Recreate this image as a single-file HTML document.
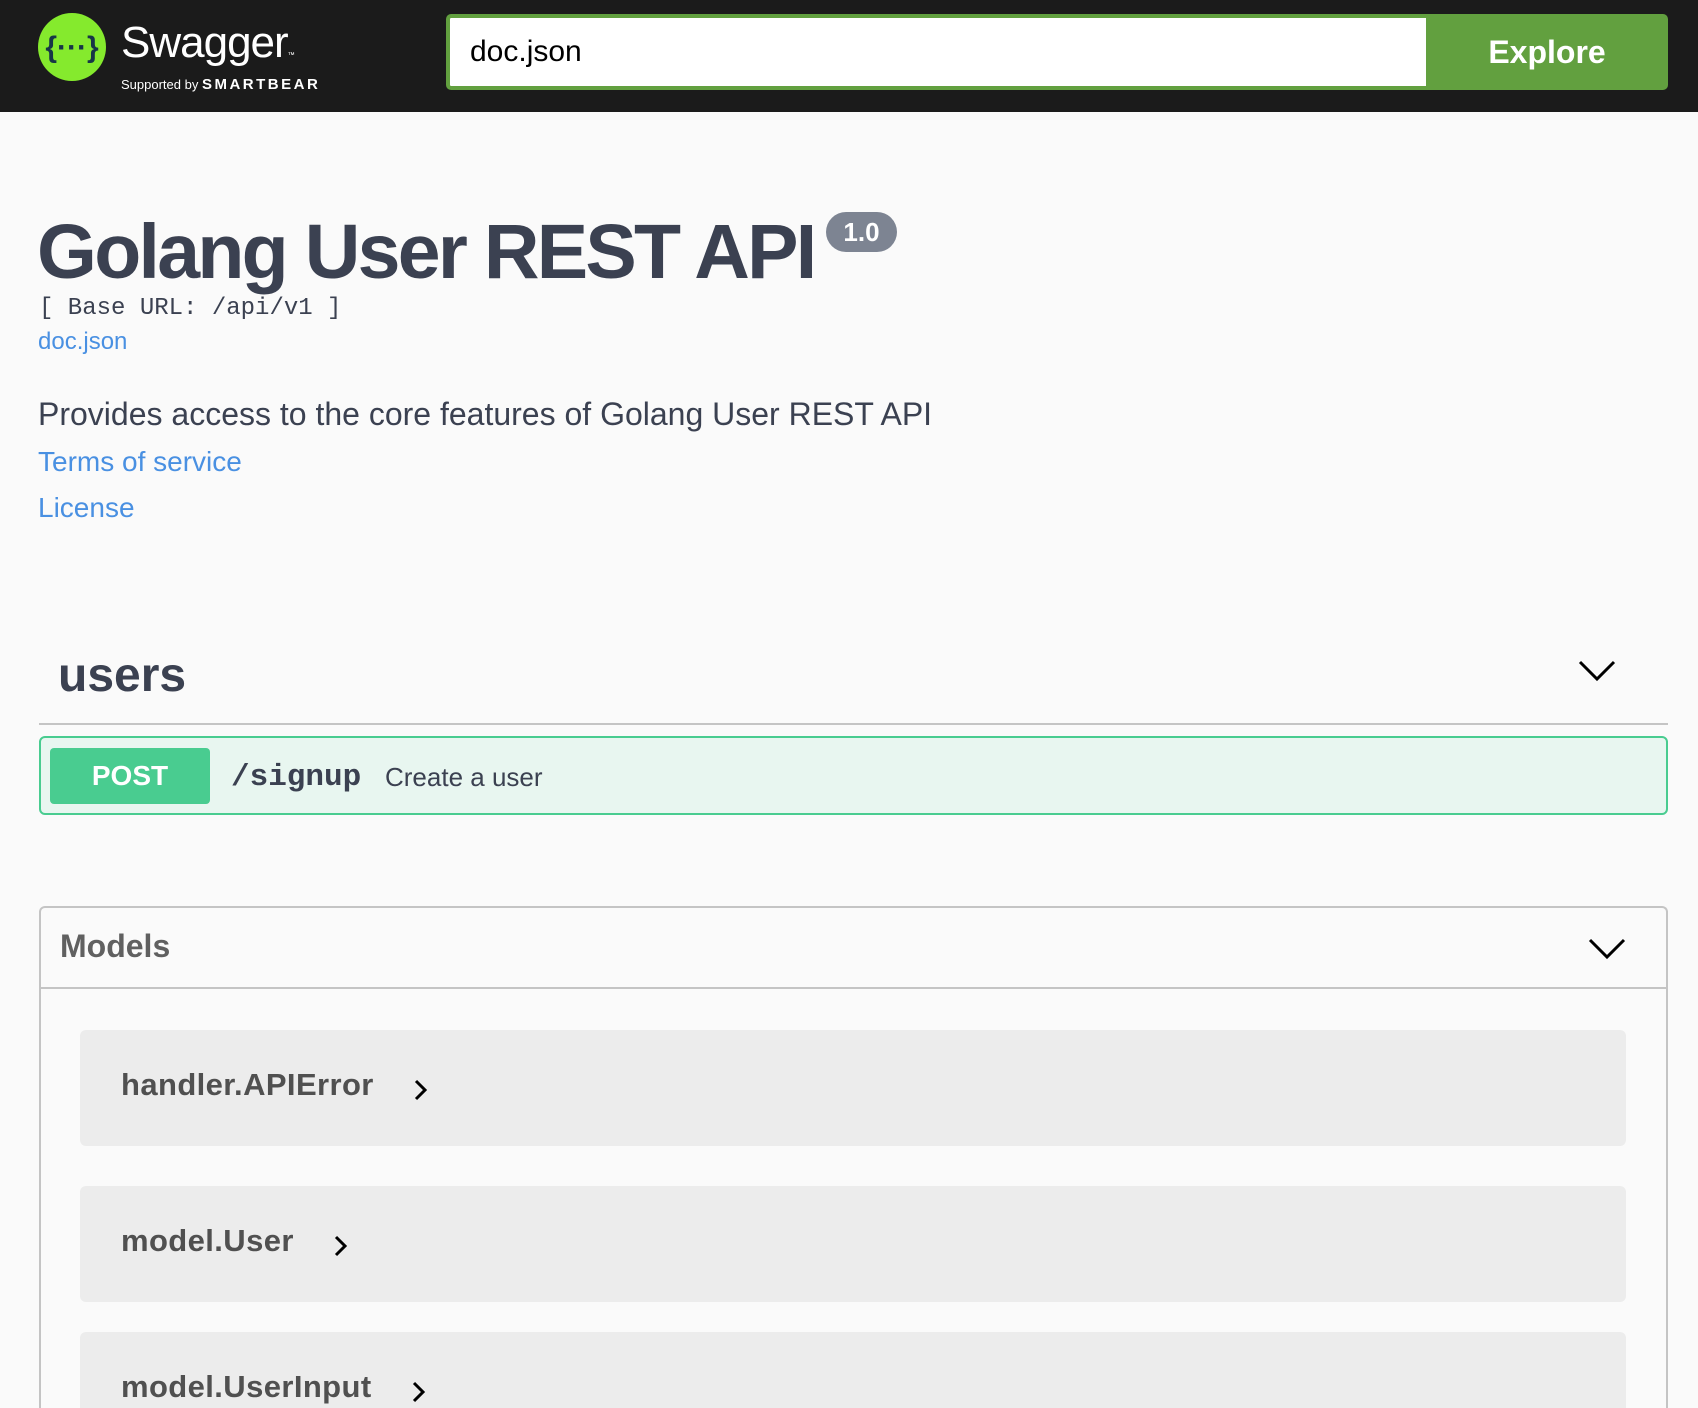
<!DOCTYPE html>
<html style="overflow:hidden;height:1408px"><head><meta charset="utf-8"><style>
*{margin:0;padding:0;box-sizing:border-box}
html,body{overflow:hidden}
body{width:1698px;height:1408px;background:#fafafa;font-family:"Liberation Sans",Arial,sans-serif;color:#3b4151;position:relative}
.abs{position:absolute}
.hdr{left:0;top:0;width:1698px;height:112px;background:#1b1b1b}
.inp{left:446px;top:14px;width:985px;height:76px;border:4px solid #62a03f;border-right:none;border-radius:5px 0 0 5px;background:#fff;font-size:30px;color:#000;padding-left:20px;line-height:68px}
.btn{left:1426px;top:14px;width:242px;height:76px;background:#62a03f;border-radius:0 5px 5px 0;color:#fff;font-weight:bold;font-size:32px;text-align:center;line-height:76px}
.link{color:#4990e2}
.chev{stroke:#000;stroke-width:3;fill:none}
.item{left:80px;width:1546px;height:116px;background:#ececec;border-radius:6px}
.item span{position:absolute;left:41px;top:37px;font-size:31px;font-weight:bold;color:#505050;letter-spacing:0.4px}
</style></head><body>
<div class="abs hdr"></div>
<svg class="abs" style="left:37px;top:12px" width="70" height="70" viewBox="0 0 70 70">
<circle cx="35" cy="35" r="34" fill="#85ea2d"/>
<text x="35" y="45" text-anchor="middle" font-family="Liberation Sans" font-weight="bold" font-size="30" fill="#173647">{···}</text>
</svg>
<div class="abs" style="left:121px;top:18px;color:#fff;font-size:44px;letter-spacing:-1px">Swagger<span style="font-size:7px">™</span></div>
<div class="abs" style="left:121px;top:76px;color:#fff;font-size:13px">Supported by <span style="font-size:15px;letter-spacing:2.5px;font-weight:bold">SMARTBEAR</span></div>
<div class="abs inp">doc.json</div>
<div class="abs btn">Explore</div>

<div class="abs" style="left:37px;top:208px;font-size:77px;font-weight:bold;letter-spacing:-2.7px;white-space:nowrap">Golang User REST API</div>
<div class="abs" style="left:826px;top:212px;width:71px;height:40px;background:#7d8492;border-radius:20px;color:#fff;font-weight:bold;font-size:26px;text-align:center;line-height:40px">1.0</div>
<div class="abs" style="left:39px;top:295px;font-family:'Liberation Mono',monospace;font-size:24px;color:#3b4151">[ Base URL: /api/v1 ]</div>
<div class="abs link" style="left:38px;top:328px;font-size:24px">doc.json</div>
<div class="abs" style="left:38px;top:396px;font-size:32px">Provides access to the core features of Golang User REST API</div>
<div class="abs link" style="left:38px;top:446px;font-size:28px">Terms of service</div>
<div class="abs link" style="left:38px;top:492px;font-size:28px">License</div>

<div class="abs" style="left:58px;top:648px;font-size:48px;font-weight:bold">users</div>
<svg class="abs" style="left:1578px;top:658px" width="38" height="26"><path class="chev" d="M2 4 L19 21 L36 4"/></svg>
<div class="abs" style="left:39px;top:723px;width:1629px;height:2px;background:#c4c4c4"></div>
<div class="abs" style="left:39px;top:736px;width:1629px;height:79px;background:#e8f6f0;border:2px solid #49cc90;border-radius:6px"></div>
<div class="abs" style="left:50px;top:748px;width:160px;height:56px;background:#49cc90;border-radius:4px;color:#fff;font-weight:bold;font-size:28px;text-align:center;line-height:56px">POST</div>
<div class="abs" style="left:231px;top:760px;font-family:'Liberation Mono',monospace;font-weight:bold;font-size:31px">/signup</div>
<div class="abs" style="left:385px;top:762px;font-size:26px">Create a user</div>

<div class="abs" style="left:39px;top:906px;width:1629px;height:502px;border:2px solid #c4c4c4;border-bottom:none;border-radius:6px 6px 0 0"></div>
<div class="abs" style="left:39px;top:987px;width:1629px;height:2px;background:#c4c4c4"></div>
<div class="abs" style="left:60px;top:928px;font-size:32px;font-weight:bold;color:#606060">Models</div>
<svg class="abs" style="left:1588px;top:936px" width="38" height="26"><path class="chev" d="M2 4 L19 21 L36 4"/></svg>

<div class="abs item" style="top:1030px"><span>handler.APIError</span><svg style="position:absolute;left:333px;top:48px" width="16" height="24"><path class="chev" d="M3 3 L12 12 L3 21"/></svg></div>
<div class="abs item" style="top:1186px"><span>model.User</span><svg style="position:absolute;left:253px;top:48px" width="16" height="24"><path class="chev" d="M3 3 L12 12 L3 21"/></svg></div>
<div class="abs item" style="top:1332px;height:76px;border-radius:6px 6px 0 0"><span>model.UserInput</span><svg style="position:absolute;left:331px;top:48px" width="16" height="24"><path class="chev" d="M3 3 L12 12 L3 21"/></svg></div>
</body></html>
